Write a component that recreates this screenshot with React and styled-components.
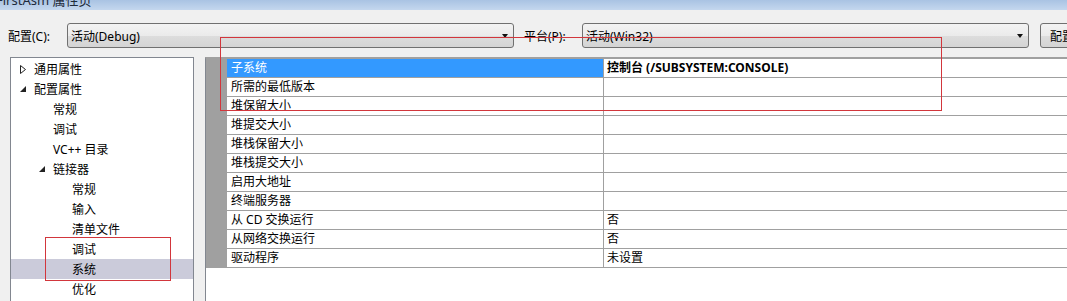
import React from 'react';
import styled, { createGlobalStyle } from 'styled-components';

const Global = createGlobalStyle`
  html, body {
    margin: 0;
    padding: 0;
    background: #f0f0f0;
  }
  body {
    font-family: "Noto Sans", "Noto Sans CJK SC", sans-serif;
    font-size: 12px;
    color: #000;
  }
`;

const Window = styled.div`
  position: relative;
  width: 1067px;
  height: 301px;
  overflow: hidden;
  background: #f0f0f0;
  display: flex;
  flex-direction: column;
`;

const TitleBar = styled.div`
  height: 10px;
  flex: none;
  background: linear-gradient(#a9c3e3, #c4d7ee);
  overflow: hidden;
`;

const TitleText = styled.div`
  margin: -8px 0 0 -4px;
  font-size: 13px;
  line-height: 16px;
  color: #1e2a3a;
  white-space: nowrap;
`;

const Toolbar = styled.div`
  flex: none;
  display: flex;
  align-items: center;
  padding: 13px 0 8px 8px;
  white-space: nowrap;
`;

const Label = styled.span`
  flex: none;
  width: ${p => p.$w}px;
  margin-left: ${p => p.$ml || 0}px;
`;

const Combo = styled.div`
  flex: none;
  box-sizing: border-box;
  width: 447px;
  height: 25px;
  border: 1px solid #707070;
  border-radius: 3px;
  background: linear-gradient(#f3f3f3, #ebebeb 50%, #dddddd 51%, #d4d4d4);
  display: flex;
  align-items: center;
  padding: 0 5px 0 3px;
`;

const ComboText = styled.span`
  flex: 1;
`;

const Arrow = styled.span`
  width: 0;
  height: 0;
  border-left: 3.5px solid transparent;
  border-right: 3.5px solid transparent;
  border-top: 4px solid #111;
`;

const Button = styled.div`
  flex: none;
  box-sizing: border-box;
  margin-left: 11px;
  width: 110px;
  height: 25px;
  border: 1px solid #707070;
  border-radius: 3px;
  background: linear-gradient(#f3f3f3, #ebebeb 50%, #dddddd 51%, #d4d4d4);
  display: flex;
  align-items: center;
  padding-left: 9px;
`;

const Main = styled.div`
  flex: 1;
  display: flex;
  align-items: stretch;
  min-height: 0;
`;

const TreePanel = styled.div`
  flex: none;
  box-sizing: border-box;
  margin: 1px 0 0 10px;
  width: 184px;
  border: 1px solid #828790;
  border-bottom: none;
  background: #fff;
  padding-top: 1px;
`;

const TreeRow = styled.div`
  height: 20px;
  display: flex;
  align-items: center;
  padding-left: ${p => p.$level * 19 + 4}px;
  background: ${p => (p.$selected ? '#cbcbda' : 'transparent')};
  white-space: nowrap;
`;

const Expander = styled.span`
  flex: none;
  width: 19px;
  height: 20px;
  display: flex;
  align-items: center;
  padding-left: 5px;
  box-sizing: border-box;
`;

const Grid = styled.div`
  flex: 1;
  margin: 1px 0 0 11px;
  border-top: 2px solid #a0a0a0;
  border-left: 1px solid #828790;
  background: #fff;
  display: flex;
  flex-direction: column;
`;

const GridRow = styled.div`
  display: flex;
  height: 19px;
`;

const Strip = styled.div`
  flex: none;
  width: 21px;
  background: #a0a0a0;
`;

const NameCell = styled.div`
  flex: none;
  box-sizing: border-box;
  width: 377px;
  padding-left: 4px;
  line-height: 18px;
  border-bottom: 1px solid #a0a0a0;
  border-right: 1px solid #a0a0a0;
  background: ${p => (p.$selected ? '#3399ff' : '#fff')};
  color: ${p => (p.$selected ? '#fff' : '#000')};
  white-space: nowrap;
`;

const ValueCell = styled.div`
  flex: 1;
  padding-left: 3px;
  line-height: 18px;
  border-bottom: 1px solid #a0a0a0;
  font-weight: ${p => (p.$bold ? 700 : 400)};
  white-space: nowrap;
`;

const Mark = styled.div`
  position: absolute;
  left: ${p => p.$x}px;
  top: ${p => p.$y}px;
  width: ${p => p.$w}px;
  height: ${p => p.$h}px;
  border: 1px solid #d2363c;
  box-sizing: border-box;
  pointer-events: none;
`;

const Collapsed = () => (
  <svg width="6" height="9" viewBox="0 0 6 9">
    <path d="M0.5 0.5 L5.5 4.5 L0.5 8.5 Z" fill="none" stroke="#222" strokeWidth="1" />
  </svg>
);

const Expanded = () => (
  <svg width="6" height="6" viewBox="0 0 6 6">
    <path d="M6 0 L6 6 L0 6 Z" fill="#222" />
  </svg>
);

const tree = [
  { label: '通用属性', level: 0, exp: 'closed' },
  { label: '配置属性', level: 0, exp: 'open' },
  { label: '常规', level: 1 },
  { label: '调试', level: 1 },
  { label: 'VC++ 目录', level: 1 },
  { label: '链接器', level: 1, exp: 'open' },
  { label: '常规', level: 2 },
  { label: '输入', level: 2 },
  { label: '清单文件', level: 2 },
  { label: '调试', level: 2 },
  { label: '系统', level: 2, selected: true },
  { label: '优化', level: 2 },
];

const props = [
  { name: '子系统', value: '控制台 (/SUBSYSTEM:CONSOLE)', selected: true, bold: true },
  { name: '所需的最低版本', value: '' },
  { name: '堆保留大小', value: '' },
  { name: '堆提交大小', value: '' },
  { name: '堆栈保留大小', value: '' },
  { name: '堆栈提交大小', value: '' },
  { name: '启用大地址', value: '' },
  { name: '终端服务器', value: '' },
  { name: '从 CD 交换运行', value: '否' },
  { name: '从网络交换运行', value: '否' },
  { name: '驱动程序', value: '未设置' },
];

export default function App() {
  return (
    <>
      <Global />
      <Window>
        <TitleBar>
          <TitleText>FirstAsm 属性页</TitleText>
        </TitleBar>
        <Toolbar>
          <Label $w={59}>配置(C):</Label>
          <Combo>
            <ComboText>活动(Debug)</ComboText>
            <Arrow />
          </Combo>
          <Label $w={58} $ml={10}>平台(P):</Label>
          <Combo>
            <ComboText>活动(Win32)</ComboText>
            <Arrow />
          </Combo>
          <Button>配置管理器(O)...</Button>
        </Toolbar>
        <Main>
          <TreePanel>
            {tree.map((t, i) => (
              <TreeRow key={i} $level={t.level} $selected={t.selected}>
                <Expander>
                  {t.exp === 'closed' && <Collapsed />}
                  {t.exp === 'open' && <Expanded />}
                </Expander>
                {t.label}
              </TreeRow>
            ))}
          </TreePanel>
          <Grid>
            {props.map((p, i) => (
              <GridRow key={i}>
                <Strip />
                <NameCell $selected={p.selected}>{p.name}</NameCell>
                <ValueCell $bold={p.bold}>{p.value}</ValueCell>
              </GridRow>
            ))}
          </Grid>
        </Main>
        <Mark $x={220} $y={37} $w={722} $h={74} />
        <Mark $x={45} $y={237} $w={126} $h={44} />
      </Window>
    </>
  );
}
